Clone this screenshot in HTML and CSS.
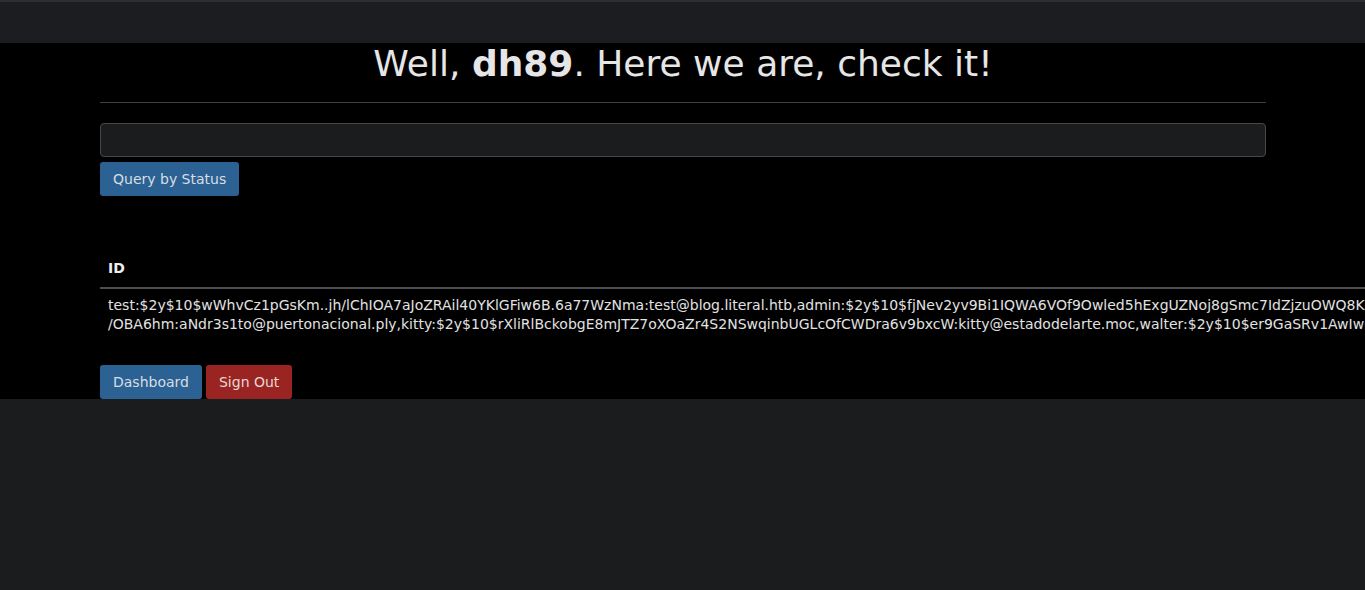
FILE: index.html
```html
<!DOCTYPE html>
<html lang="en">
<head>
<meta charset="utf-8">
<title>Dashboard</title>
<link rel="stylesheet" href="styles.css">
</head>
<body>
<div class="topline"></div>
<nav class="navbar"></nav>
<main class="main">
  <div class="container">
    <h1 class="title">Well, <b>dh89</b>. Here we are, check it!</h1>
    <hr class="divider">
    <form class="query">
      <input class="field" type="text">
      <button class="btn btn-primary" type="button">Query by Status</button>
    </form>
    <table class="results">
      <thead>
        <tr><th>ID</th></tr>
      </thead>
      <tbody>
        <tr><td>test:$2y$10$wWhvCz1pGsKm..jh/lChIOA7aJoZRAil40YKlGFiw6B.6a77WzNma:test@blog.literal.htb,admin:$2y$10$fjNev2yv9Bi1IQWA6VOf9Owled5hExgUZNoj8gSmc7IdZjzuOWQ8K5Yp.Hq2mTcRb7xNvE4sL8dJ9fKzAbQwUe3Gh1<br>/OBA6hm:aNdr3s1to@puertonacional.ply,kitty:$2y$10$rXliRlBckobgE8mJTZ7oXOaZr4S2NSwqinbUGLcOfCWDra6v9bxcW:kitty@estadodelarte.moc,walter:$2y$10$er9GaSRv1AwIwu9O.tlnnePJi7BVpKt3fQzXmHrT6</td></tr>
      </tbody>
    </table>
    <div class="actions">
      <button class="btn btn-primary" type="button">Dashboard</button>
      <button class="btn btn-danger" type="button">Sign Out</button>
    </div>
  </div>
</main>
</body>
</html>
```
FILE: styles.css
```css
html, body {
  margin: 0;
  padding: 0;
}
body {
  background: #1b1c1e;
  color: #e2e2e2;
  font-family: "DejaVu Sans", sans-serif;
  font-size: 14px;
  overflow: hidden;
}
.topline {
  height: 2px;
  background: #2e2d34;
}
.navbar {
  height: 41px;
  background: #1c1d20;
}
.main {
  background: #000;
}
.container {
  width: 1166px;
  margin: 0 0 0 100px;
}
.title {
  margin: 0;
  font-size: 36px;
  font-weight: normal;
  text-align: center;
  line-height: 41px;
  color: #e6e6e6;
}
.title b {
  font-weight: bold;
}
.divider {
  margin: 18px 0 20px;
  border: 0;
  border-top: 1px solid #3f4043;
  height: 0;
}
.query {
  display: flex;
  flex-direction: column;
  align-items: flex-start;
  gap: 5px;
  margin: 0;
}
.field {
  box-sizing: border-box;
  width: 100%;
  height: 34px;
  background: #1b1c1e;
  border: 1px solid #45474b;
  border-radius: 4px;
  color: #e2e2e2;
  margin: 0;
}
.btn {
  box-sizing: border-box;
  height: 34px;
  padding: 0 13px;
  border: 0;
  border-radius: 3px;
  font-family: "DejaVu Sans", sans-serif;
  font-size: 14px;
  color: #d8dde3;
  line-height: 34px;
}
.btn-primary {
  background: #2b6293;
}
.btn-danger {
  background: #9a2422;
  color: #e6d8d8;
}
.results {
  margin-top: 55px;
  border-collapse: collapse;
  width: 1265px;
}
.results th {
  text-align: left;
  font-weight: bold;
  padding: 8px 8px 9px;
  line-height: 19px;
  border-bottom: 2px solid #4b4d51;
  color: #eee;
}
.results td {
  padding: 7px 8px 8px;
  line-height: 19px;
  white-space: nowrap;
  color: #e2e2e2;
}
.actions {
  display: flex;
  gap: 4px;
  margin-top: 23px;
}
```
